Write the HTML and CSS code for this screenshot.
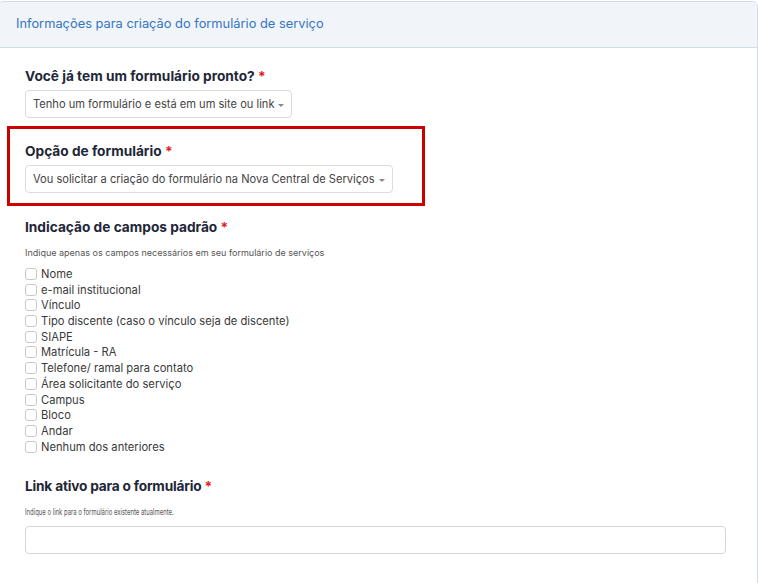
FILE: index.html
```html
<!DOCTYPE html>
<html lang="pt-BR">
<head>
<meta charset="utf-8">
<link rel="stylesheet" href="styles.css">
</head>
<body>
<div class="card">
  <div class="card-header">Informações para criação do formulário de serviço</div>
  <div class="card-body">
    <div class="group">
      <div class="label">Você já tem um formulário pronto? <span class="req">*</span></div>
      <div class="select">Tenho um formulário e está em um site ou link <span class="caret"></span></div>
    </div>
    <div class="group highlight">
      <div class="label">Opção de formulário <span class="req">*</span></div>
      <div class="select">Vou solicitar a criação do formulário na Nova Central de Serviços <span class="caret"></span></div>
    </div>
    <div class="group fields">
      <div class="label">Indicação de campos padrão <span class="req">*</span></div>
      <div class="help">Indique apenas os campos necessários em seu formulário de serviços</div>
      <ul class="checks">
        <li><span class="box"></span>Nome</li>
        <li><span class="box"></span>e-mail institucional</li>
        <li><span class="box"></span>Vínculo</li>
        <li><span class="box"></span>Tipo discente (caso o vínculo seja de discente)</li>
        <li><span class="box"></span>SIAPE</li>
        <li><span class="box"></span>Matrícula - RA</li>
        <li><span class="box"></span>Telefone/ ramal para contato</li>
        <li><span class="box"></span>Área solicitante do serviço</li>
        <li><span class="box"></span>Campus</li>
        <li><span class="box"></span>Bloco</li>
        <li><span class="box"></span>Andar</li>
        <li><span class="box"></span>Nenhum dos anteriores</li>
      </ul>
    </div>
    <div class="group link">
      <div class="label">Link ativo para o formulário <span class="req">*</span></div>
      <div class="help help-link"><span class="squeeze">Indique o link para o formulário existente atualmente.</span></div>
      <div class="input"></div>
    </div>
  </div>
</div>
</body>
</html>
```

FILE: styles.css
```css
* { box-sizing: border-box; }
html, body { margin: 0; padding: 0; background: #fff; }
body {
  font-family: Inter, "Noto Sans", sans-serif;
  color: #333;
  width: 758px;
  height: 583px;
  overflow: hidden;
}
.card {
  margin: 1px 0 0 -2px;
  width: 760px;
  height: 600px;
  border: 1px solid #d3dce9;
  border-radius: 5px;
  background: #fff;
}
.card-header {
  height: 46px;
  background: #f1f5fa;
  border-bottom: 1px solid #d3dce9;
  border-radius: 4px 4px 0 0;
  padding-left: 17px;
  font-size: 12.85px;
  line-height: 44px;
  color: #3474c4;
}
.card-body {
  padding: 20px 0 0 26px;
}
.label {
  font-size: 13.7px;
  line-height: 17px;
  font-weight: 700;
  color: #1e2738;
}
.req { color: #e41b1b; }
.select {
  display: inline-flex;
  align-items: center;
  margin-top: 5px;
  height: 28px;
  padding: 0 7px 0 7px;
  border: 1px solid #dcdcdc;
  border-radius: 4px;
  font-size: 11.1px;
  color: #444;
  white-space: nowrap;
}
.caret {
  display: inline-block;
  margin-left: 4px;
  margin-top: 2px;
  width: 0; height: 0;
  border-left: 3px solid transparent;
  border-right: 3px solid transparent;
  border-top: 3px solid #888;
}
.highlight {
  margin: 8px 0 0 -18px;
  width: 418px;
  height: 80px;
  border: 3px solid #cc0000;
  padding: 14px 15px 0 15px;
}
.fields { margin-top: 13px; }
.help {
  margin-top: 11px;
  font-size: 9px;
  line-height: 12px;
  color: #555;
}
.checks {
  list-style: none;
  margin: 7px 0 0 0;
  padding: 0;
}
.checks li {
  display: flex;
  align-items: center;
  height: 15.73px;
  font-size: 11.2px;
  color: #3a3a3a;
}
.box {
  width: 12px; height: 12px;
  border: 1px solid #c9c9c9;
  border-radius: 3px;
  margin-right: 4px;
  flex: none;
}
.link { margin-top: 23px; }
.link .label { letter-spacing: -0.2px; }
.help-link { margin-top: 11px; }
.squeeze {
  display: inline-block;
  transform: scaleX(0.66);
  transform-origin: left center;
  white-space: nowrap;
}
.input {
  margin-top: 8px;
  width: 701px;
  height: 28px;
  border: 1px solid #d6d6d6;
  border-radius: 4px;
}
```
